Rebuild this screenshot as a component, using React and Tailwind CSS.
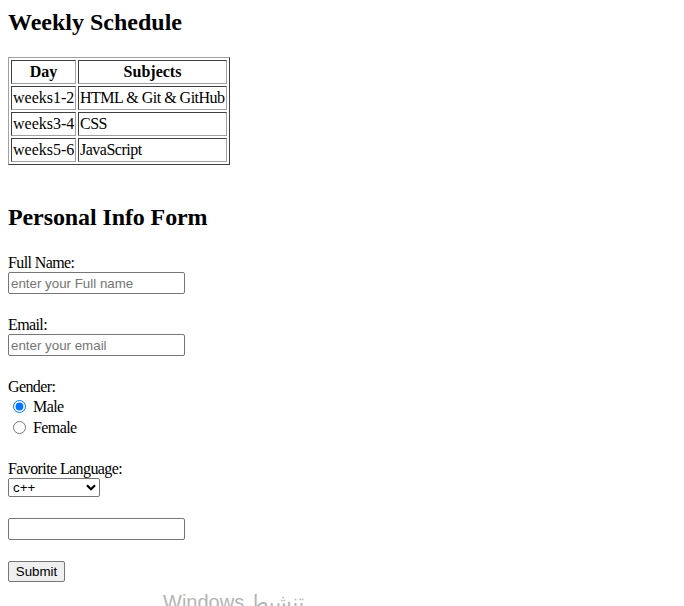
import React from "react";

const serif = "font-['Liberation_Serif','Times_New_Roman',serif]";
const sans = "font-['Liberation_Sans',Arial,sans-serif]";

function Cell({ children, head, cls = "" }) {
  const c =
    "border border-t-[#404040] border-l-[#404040] border-b-[#a0a0a0] border-r-[#a0a0a0] p-[1px] leading-5 whitespace-nowrap overflow-hidden " +
    (head ? "font-bold text-center " : "text-left font-normal ") +
    cls;
  return head ? <th className={c}>{children}</th> : <td className={c}>{children}</td>;
}

export default function App() {
  const rows = [
    ["weeks1-2", "HTML & Git & GitHub"],
    ["weeks3-4", "CSS"],
    ["weeks5-6", "JavaScript"],
  ];
  return (
    <div className={`relative h-[606px] overflow-hidden bg-white px-2 pt-2 text-black text-base ${serif}`}>
      <div className="flex flex-col items-start">
        <h2 className="m-0 text-2xl font-bold leading-[28px]">Weekly Schedule</h2>

        <table className="mt-[21px] w-[222px] table-fixed border-separate border-spacing-[2px] border border-t-[#a0a0a0] border-l-[#a0a0a0] border-b-[#404040] border-r-[#404040]">
          <colgroup>
            <col className="w-[65px]" />
            <col className="w-[149px]" />
          </colgroup>
          <thead>
            <tr>
              <Cell head>Day</Cell>
              <Cell head>Subjects</Cell>
            </tr>
          </thead>
          <tbody>
            {rows.map(([d, s]) => (
              <tr key={d}>
                <Cell>{d}</Cell>
                <Cell cls="tracking-[-0.5px]">{s}</Cell>
              </tr>
            ))}
          </tbody>
        </table>

        <h2 className="mt-[38px] text-2xl font-bold leading-[28px] tracking-[-0.1px]">Personal Info Form</h2>

        <form className="flex flex-col items-start tracking-[-0.6px]" onSubmit={(e) => e.preventDefault()}>
          <label className="mt-[22px] block leading-[19px]">Full Name:</label>
          <input
            type="text"
            placeholder="enter your Full name"
            className={`h-[22px] w-[177px] rounded-[2px] border border-[#767676] px-[2px] text-[13.33px] tracking-normal placeholder:text-[#757575] ${sans}`}
          />

          <label className="mt-[21px] block leading-[19px]">Email:</label>
          <input
            type="email"
            placeholder="enter your email"
            className={`h-[22px] w-[177px] rounded-[2px] border border-[#767676] px-[2px] text-[13.33px] tracking-normal placeholder:text-[#757575] ${sans}`}
          />

          <div className="mt-[21px] leading-[19px]">Gender:</div>
          <label className="flex h-[21px] items-center leading-[21px]">
            <input type="radio" name="gender" defaultChecked className="m-0 ml-[5px] mr-[7px] h-[13px] w-[13px] accent-[#0075ff]" />
            Male
          </label>
          <label className="flex h-[21px] items-center leading-[21px]">
            <input type="radio" name="gender" className="m-0 ml-[5px] mr-[7px] h-[13px] w-[13px] accent-[#0075ff]" />
            Female
          </label>

          <label className="mt-[21px] block leading-[19px]">Favorite Language:</label>
          <span className="relative block h-[19px] w-[92px]">
            <select
              defaultValue="c++"
              className={`block h-[19px] w-[92px] appearance-none rounded-[2px] border border-[#767676] bg-white pl-[4px] text-[13.33px] leading-[17px] tracking-normal text-black ${sans}`}
            >
              <option value="c++">c++</option>
              <option value="js">JavaScript</option>
              <option value="py">Python</option>
            </select>
            <svg
              className="pointer-events-none absolute left-[78px] top-[6px]"
              width="10"
              height="7"
              viewBox="0 0 10 7"
            >
              <path d="M1 1.2 L5 5.2 L9 1.2" fill="none" stroke="#000" strokeWidth="2.2" />
            </svg>
          </span>

          <input
            type="text"
            className={`mt-[21px] h-[22px] w-[177px] rounded-[2px] border border-[#767676] px-[2px] text-[13.33px] tracking-normal ${sans}`}
          />

          <button
            type="submit"
            className={`mt-[21px] h-[21px] w-[57px] rounded-[2px] border border-[#767676] bg-[#efefef] text-[13.33px] leading-[17px] tracking-normal text-black ${sans}`}
          >
            Submit
          </button>
        </form>
      </div>

      <div className="pointer-events-none absolute left-[163px] top-[590px] whitespace-nowrap font-['Liberation_Sans','DejaVu_Sans',sans-serif] text-[20px] leading-[24px] text-[#b4b4b4]">
        Windows تنشيط
      </div>
    </div>
  );
}
